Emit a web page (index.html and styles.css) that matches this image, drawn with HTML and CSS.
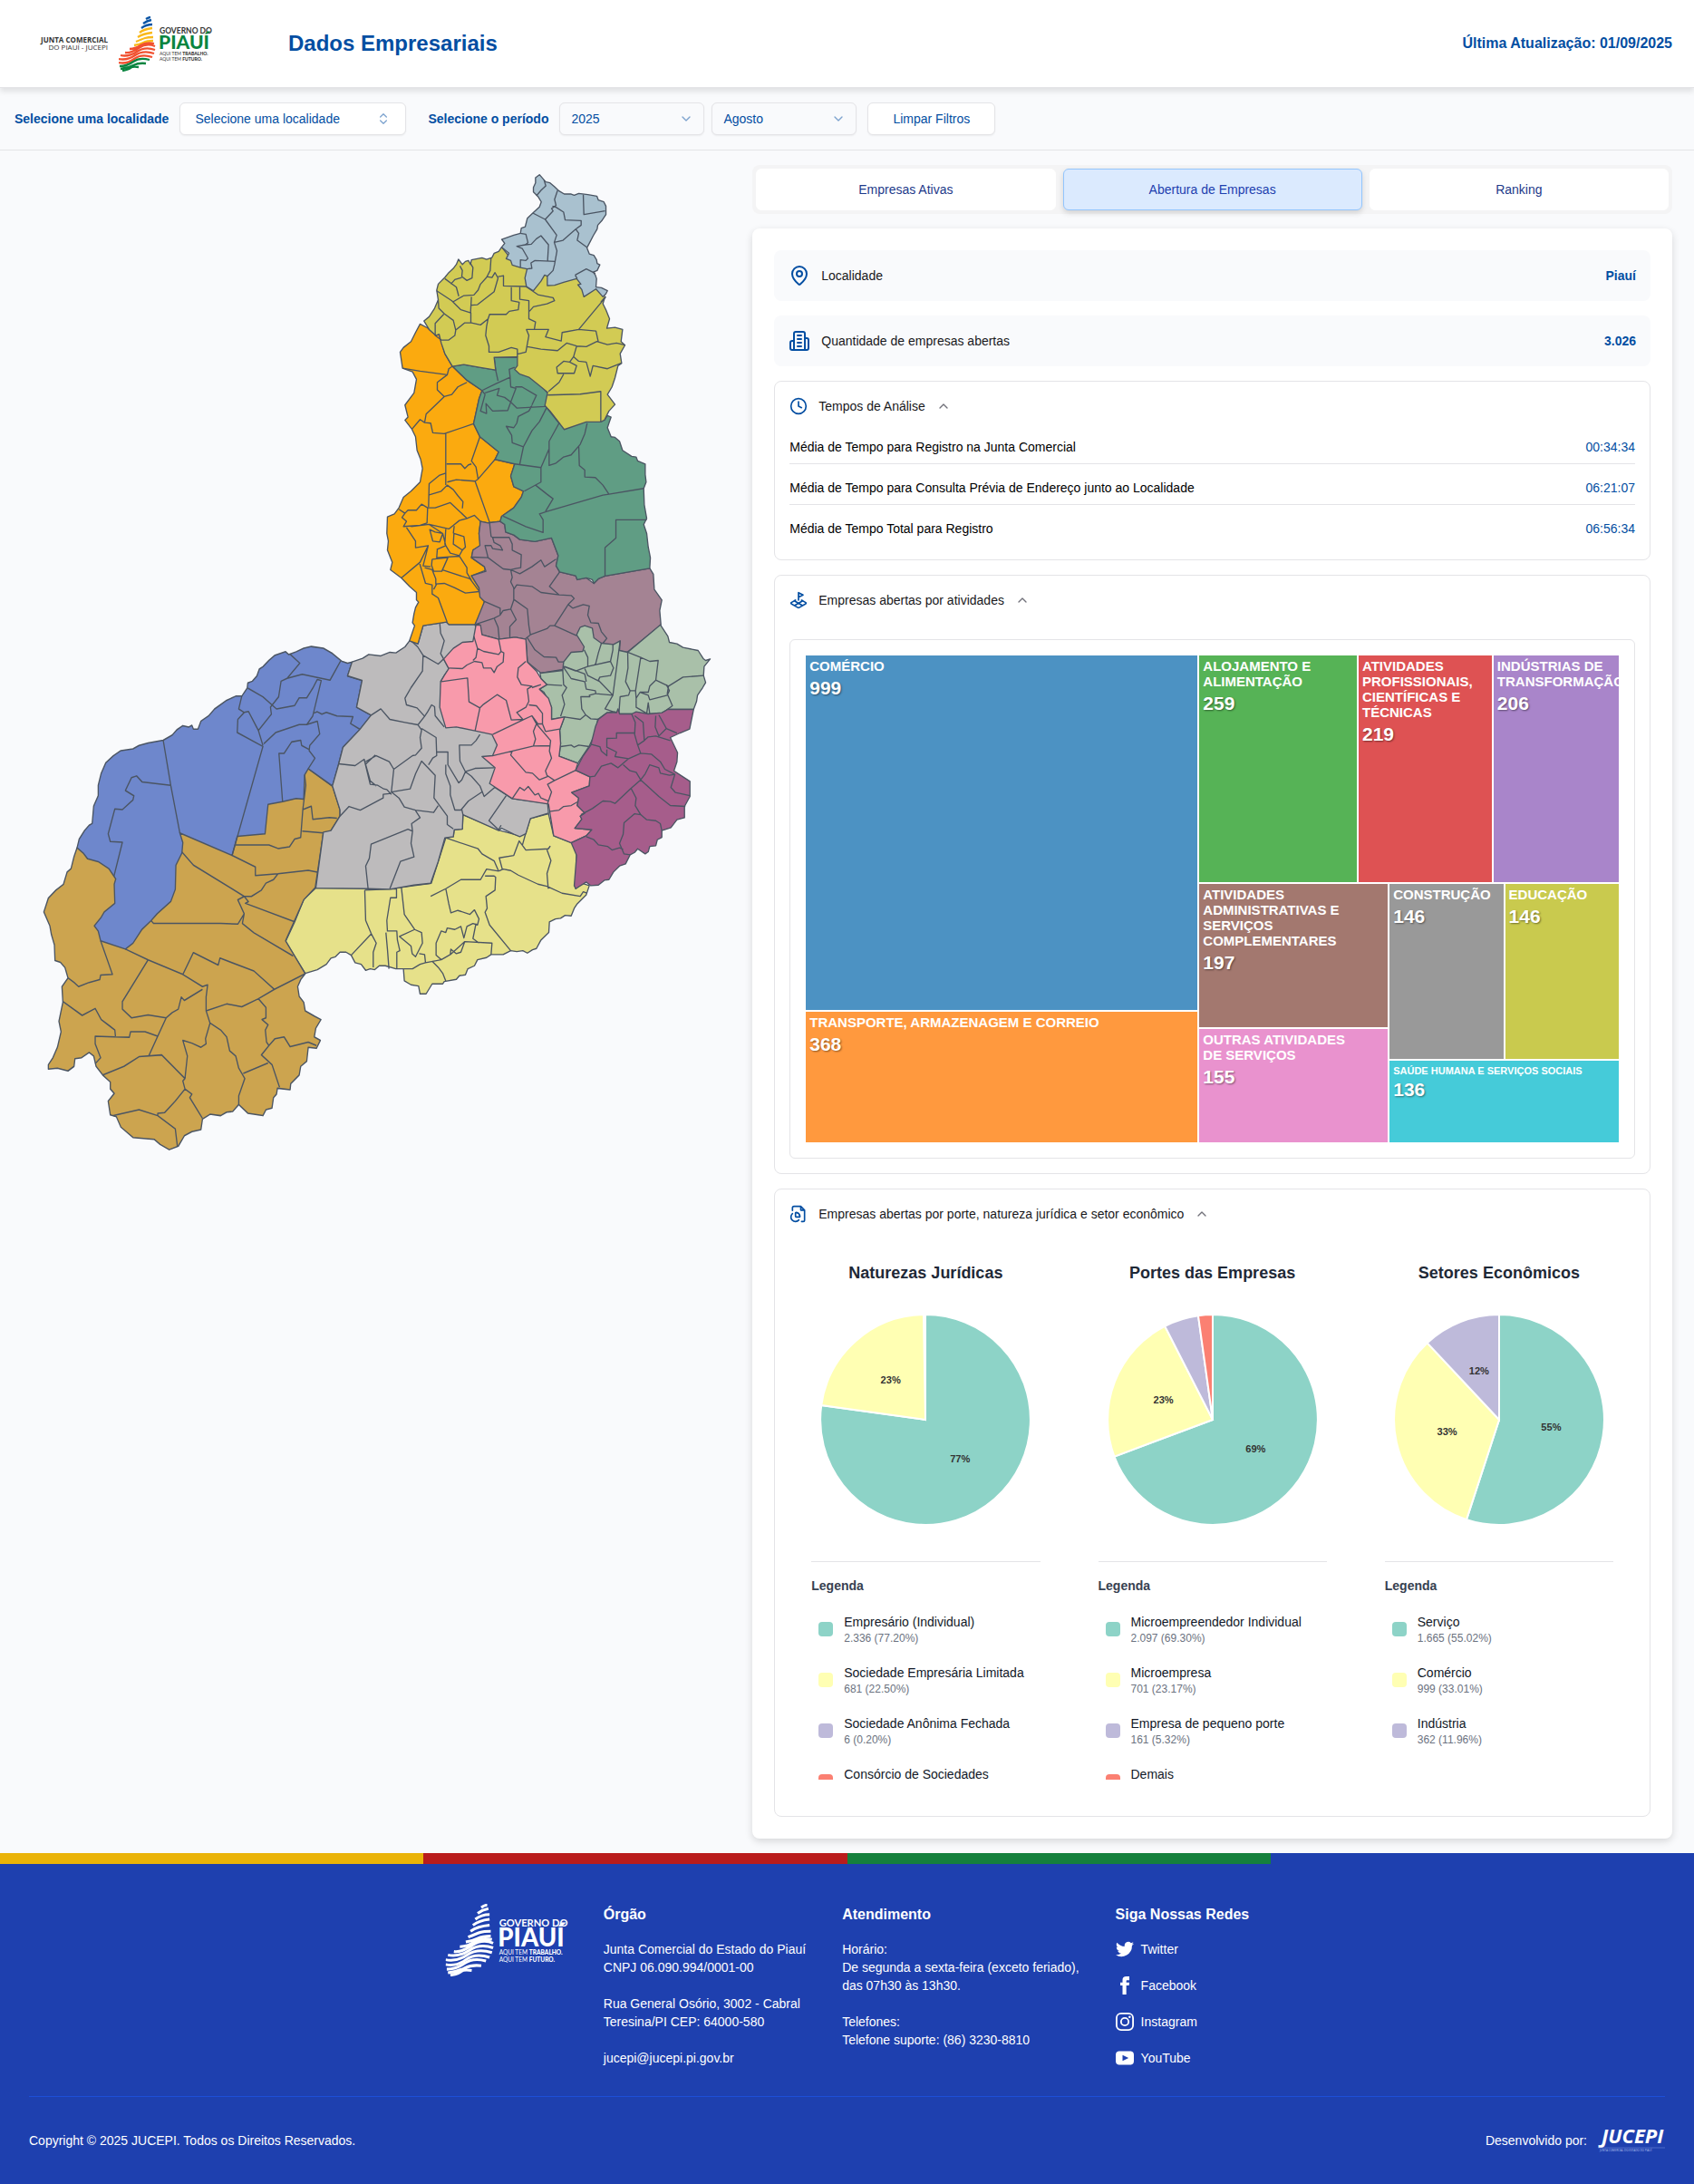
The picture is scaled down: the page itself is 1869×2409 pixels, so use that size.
FILE: index.html
```html
<!DOCTYPE html>
<html lang="pt-BR">
<head>
<meta charset="utf-8">
<meta name="viewport" content="width=device-width, initial-scale=1">
<title>Dados Empresariais - JUCEPI</title>
<link rel="stylesheet" href="styles.css">
</head>
<body>
<svg class="defs" aria-hidden="true">
  <symbol id="logo-bands" viewBox="0 0 102 61">
    <g fill="none" stroke-width="2.300">
      <g class="band-1"><path d="M30 3q3-2 5-2M27 8q4-3 9-4M25 13q5-4 12-4"/></g>
      <g class="band-2"><path d="M23 18q5-4 14-5M21 23q6-4 16-5M19 28q7-3 10-4t9-1M17 32q6-1 10-3t11-2"/></g>
      <g class="band-3"><path d="M12 36q6 0 12-4t15-2M7 40q6 1 15-5t18-2M2 43q9 2 18-4t20-2M0 47q9 2 18-4t21-2M0 51q9 2 17-4t20-2"/></g>
      <g class="band-4"><path d="M1 55q8 0 15-5t18-2M2 58q8-1 14-4t14-2M4 60q7-1 9-3t9-1"/></g>
    </g>
  </symbol>
  <symbol id="i-up" viewBox="0 0 24 24"><path d="m18 15-6-6-6 6"/></symbol>
  <symbol id="i-down" viewBox="0 0 24 24"><path d="m6 9 6 6 6-6"/></symbol>
</svg>

<header class="topbar">
  <div class="brand">
    <p class="brand-org"><strong>JUNTA COMERCIAL</strong><br>DO PIAUÍ - JUCEPI</p>
    <svg class="logo logo-color" viewBox="0 0 204 122" role="img" aria-label="Governo do Piauí">
      <use href="#logo-bands" width="204" height="122"/>
      <text class="logo-gov" x="90" y="38" font-size="17">GOVERNO DO</text>
      <text class="logo-name" x="88" y="72" font-size="42">PIAUÍ</text>
      <text class="logo-tag" x="90" y="85" font-size="10">AQUI TEM <tspan class="strong">TRABALHO.</tspan></text>
      <text class="logo-tag" x="90" y="97" font-size="10">AQUI TEM <tspan class="strong">FUTURO.</tspan></text>
    </svg>
  </div>
  <h1>Dados Empresariais</h1>
  <p class="updated">Última Atualização: 01/09/2025</p>
</header>

<form class="filters">
  <div class="field">
    <label for="place">Selecione uma localidade</label>
    <button type="button" id="place" class="control combo" aria-haspopup="listbox">Selecione uma localidade
      <svg class="icon" viewBox="0 0 24 24" width="16" height="16"><path d="m7 15 5 5 5-5M7 9l5-5 5 5"/></svg></button>
  </div>
  <div class="field">
    <label for="year">Selecione o período</label>
    <div class="period">
      <span class="select"><select id="year" class="control"><option>2025</option></select><svg class="icon" width="16" height="16"><use href="#i-down"/></svg></span>
      <span class="select"><select class="control" aria-label="Mês"><option>Agosto</option></select><svg class="icon" width="16" height="16"><use href="#i-down"/></svg></span>
    </div>
    <button type="reset" class="control">Limpar Filtros</button>
  </div>
</form>

<main class="content">
  <section class="map" aria-label="Mapa do Piauí">
    <svg viewBox="0 182 830 1100">
      <g transform="translate(310 850) scale(.33333)">
        <path class="r-yellow" d="M115 388L288 388 362 390 497 372 545 222 570 218 573 195 600 192 602 145 725 198 790 215 810 205 825 158 885 142 902 215 962 238 978 260 975 390 995 372 1020 380 1010 410 980 440 970 455 960 480 940 478 925 488 908 490 888 500 886 535 860 560 845 588 832 592 815 603 800 595 780 598 760 595 735 608 695 608 680 618 650 625 640 645 618 655 610 675 590 678 580 690 540 697 535 705 500 705 480 738 460 738 455 712 430 708 408 695 405 655 380 655 345 645 325 645 310 658 295 655 280 660 265 640 245 635 232 610 215 600 195 600 180 615 165 620 150 640 120 658 80 670 15 565 45 500 75 425Z"/>
        <path d="M277 395L280 495 298 538 315 570 305 600 305 650M277 395L382 390 382 420 362 420 350 495 352 530 383 530 385 560 393 595 383 600 383 655M298 540L232 610M347 535L352 590 357 655M398 385L408 475 442 525 392 548 430 580 434 605 445 615 468 570 465 535 442 525M457 605L475 608 478 635 460 640 435 655 405 655M478 635L530 625 560 608 608 565 698 570 695 608M500 630L520 650 535 670 545 695M530 625L513 610 513 570 530 530 545 535 550 520 575 525 595 515 605 553 615 515 635 505 650 510 655 490 640 460 625 475 585 462 562 470 555 440 545 390M608 565L595 600 580 605 562 590 560 608M645 505L635 555 655 570M495 415L545 390 595 360 660 360 680 325 720 332M545 222L652 258 665 275 705 298 720 332M675 348L705 348 710 352 708 395 678 415 682 455 675 468 690 510 760 595M720 332L735 325 760 330 785 345 850 375 880 382 930 405 990 415 1000 400 1012 405M732 325L722 288 770 280 788 232 810 262 885 258 890 250 880 262 893 297 880 340 884 390M798 248L810 205"/>
      </g>
      <g transform="translate(30 690) scale(.33333 .38265)">
        <path class="r-gold" d="M165 640L155 665 145 700 132 710 120 745 95 762 70 785 55 825 75 865 80 890 90 920 92 965 110 970 125 985 135 1015 115 1040 118 1085 105 1140 112 1170 100 1215 85 1245 70 1265 70 1278 100 1275 135 1283 155 1270 158 1248 180 1245 205 1230 220 1240 228 1270 250 1295 275 1315 275 1335 288 1348 268 1370 275 1410 295 1415 310 1445 350 1475 420 1480 440 1495 470 1510 500 1500 520 1470 545 1458 575 1452 580 1422 605 1408 640 1412 660 1402 680 1400 700 1380 730 1405 780 1412 790 1395 810 1390 815 1360 825 1350 828 1333 870 1337 872 1320 900 1295 905 1270 925 1255 930 1215 957 1218 970 1195 950 1185 955 1160 972 1135 950 1125 920 1110 915 1085 900 1068 895 1040 905 1020 920 1003 855 908 915 790 953 755 980 597 1003 593 1035 548 1035 530 1010 462 930 412 700 500 300 600Z"/>
        <path class="r-blue" d="M165 640L172 615 190 590 205 575 215 570 220 520 235 490 235 460 245 425 260 395 285 375 310 360 350 355 370 345 400 338 450 330 480 315 495 300 515 288 535 292 545 287 550 298 565 298 575 275 600 260 620 240 660 215 690 203 710 203 728 180 730 165 745 160 760 145 768 125 780 118 800 100 820 85 855 75 865 83 890 75 915 65 940 60 980 65 1010 80 1040 102 1060 108 1075 105 1060 145 1108 158 1090 235 1138 258 1100 300 1045 350 1030 400 1010 462 930 412 918 430 915 500 890 498 845 507 797 515 787 600 695 607 678 662 505 597 515 625 512 655 492 690 490 760 475 795 430 830 410 850 380 875 350 915 325 932 243 908 235 880 222 865 245 840 255 825 290 800 288 745 293 730 270 700 235 680 200 672 185 655Z"/>
        <path d="M450 330L475 460 505 597M475 460L380 450 362 433 345 438 325 475 353 490 350 502 315 530 290 528 268 600 275 622 315 624 287 722M710 203L700 240 718 250 732 247 765 302 780 345M718 250L697 270 695 308 780 348 678 662M730 180L780 205 825 240 885 230 900 208 925 208 945 180 960 155 973 158 945 260 925 285 900 285 822 308 783 340M860 152L902 108 870 82M860 152L910 140 1002 157 1037 102M860 152L840 160 832 205 805 235 808 255 765 302M948 252L960 248 975 255 990 250 1025 260 1078 262 1070 282 1100 298M925 285L960 275 968 312 935 345 933 360 952 382 930 412M935 358L908 345 905 330 875 335 850 368 833 368 845 507M918 430L922 460 912 530 905 610 885 615 868 637 830 642 800 632 688 632M912 530L940 520 945 558 1000 553 1025 555M910 592L980 597M678 662L755 695 755 720 830 715 930 705 960 710M512 652L550 690 718 780 742 780 775 762 790 742 815 732 830 715M718 780L697 790 718 830 697 860 640 858 418 858 410 850M718 780L732 795 722 800 885 853M718 830L712 858 750 885 880 952M243 908L282 1005 243 1007 240 1020 205 1028 170 1040 155 1028 135 1015M325 932L400 963 515 1005 580 1040 597 1035 592 1070 592 1110 605 1145 590 1190 592 1205 575 1215 545 1203 515 1195 530 1240 522 1305 445 1237 370 1242 320 1270 250 1295M400 963L315 1083 315 1105 345 1130 400 1122 460 1130 480 1115 500 1105 510 1070 520 1080 580 1048M515 1005L550 942 632 978 638 958 750 995 818 1048M592 1110L660 1090 710 1098 765 1075 818 1048 920 1003M765 1075L790 1100 790 1130 777 1135 797 1150 788 1165 792 1200 800 1210 820 1190 850 1185 870 1213 930 1200 957 1210M800 1210L775 1237 810 1265 835 1330M797 1260L715 1290M605 1145L640 1165 660 1185 670 1225 690 1240 700 1275 720 1305 700 1355 700 1380M118 1083L182 1123 225 1103 245 1135 275 1155 290 1165 292 1183M290 1185L338 1186 342 1170 390 1170 432 1183M290 1185L225 1183 225 1205 243 1245 225 1262M460 1130L432 1183 402 1240M522 1305L515 1312 522 1335 545 1350 538 1360 580 1420M522 1335L490 1370 455 1403 432 1405 432 1412M285 1412L370 1395 432 1412 490 1450 497 1500"/>
      </g>
      <g transform="translate(400 500) scale(.33333)">
        <path class="r-gray" d="M155 620L183 630 200 570 277 558 285 566 372 566 400 700 470 900 470 1010 437 1105 495 1142 612 1158 615 1190 555 1208 540 1258 520 1268 500 1260 460 1240 450 1248 332 1195 330 1243 303 1245 300 1268 272 1272 250 1350 225 1422 170 1428 90 1442 18 1440 -155 1438 -130 1253 -105 1248 -75 1200 -75 1180 -100 1100 -80 1030 -65 972 -10 914 28 866 -20 840 -2 751 -50 736 -35 690 0 678 20 665 60 670 90 658 110 660 140 640Z"/>
        <path d="M255 560L258 595 270 620 258 662 268 680 250 697 200 668 182 640 160 620M200 668L198 720 160 775 140 810 145 832 180 842 205 870 215 855 228 832 238 838 240 868 270 905M268 680L285 712 270 735 258 755M205 870L183 898 140 890 90 880 60 845 28 866M183 898L195 915 190 940 195 975 175 998 165 1000 103 1045 88 1020 45 1000 10 1020M195 910L243 940 245 1000 232 1008 218 1030M245 988L282 988 282 1030 318 1090 328 1080 340 1053 372 1042 435 1040M275 1030L275 1060 290 1100 290 1130 305 1180 325 1180 350 1150 395 1120M325 965L320 965 322 1018 340 1053 360 1068 388 1100 402 1135 437 1105M320 965L360 965 375 950 388 930M103 1045L95 1120 157 1110 175 1060 195 1018 240 1065 236 1140 280 1200 280 1228 300 1242M95 1120L120 1140 138 1170 175 1180 235 1188 250 1165M5 1012L25 1095 50 1098 70 1110 80 1112 95 1128M-75 1200L-45 1168 -8 1180 68 1140 68 1128 95 1125M175 1182L190 1205 162 1225 165 1250 150 1243 28 1293 22 1340 10 1365 18 1440M165 1250L160 1290 170 1335 125 1350 90 1440M475 1132L418 1215 450 1245 458 1230M332 1195L328 1178M-80 1027L-25 1033 5 1012 25 1083 45 1100M8 1030L42 998"/>
        <path class="r-orange" d="M190 -428L215 -415 242 -390 253 -394 272 -330 297 -288 345 -242 395 -208 385 -180 367 -98 388 -55 450 -5 438 20 503 35 490 75 500 110 532 125 525 145 510 165 500 180 460 208 455 225 415 230 390 225 385 265 390 305 365 320 360 345 403 375 405 388 360 405 385 445 390 475 403 490 395 520 372 566 285 566 277 558 200 570 183 630 155 620 172 570 165 560 170 530 175 510 185 492 178 485 178 460 155 440 128 412 92 385 98 360 82 320 85 290 80 265 82 210 105 200 120 180 135 145 160 125 190 95 198 50 192 20 180 -10 175 -55 163 -80 140 -110 150 -120 140 -160 170 -200 178 -245 165 -270 132 -282 124 -335 135 -350 160 -370 175 -400Z"/>
        <path d="M120 185L140 198 150 188 178 188 195 168 215 180 213 230 190 238 135 242 145 225 130 212 140 198M215 180L240 180 290 163 345 215 320 222 300 238 285 250 220 235M345 215L370 205 390 225M145 245L175 290 175 312 217 305 190 360 128 412M160 242L220 235 265 265 240 260 222 252 232 290 255 293 265 265 275 305 245 318M275 250L272 300 290 330 320 338 330 320 300 300 302 265 335 275 340 310 330 320M303 240L300 265M217 305L200 372 225 375M247 318L245 345 320 340 345 378 345 395 360 420M230 350L282 345 262 390 235 390 228 370 230 350M262 385L355 415 385 455M188 362L208 430 230 435 230 465 250 478 280 560M205 378L230 385 242 415 242 432 270 430 305 445 340 462 385 457M235 450L245 432"/>
        <path class="r-mauve" d="M390 225L415 230 455 225 470 235 473 260 500 270 520 285 570 292 625 280 647 338 640 372 652 392 705 405 710 418 740 412 765 430 780 415 802 406 950 380 962 400 965 450 990 485 983 520 987 567 875 658 830 650 790 628 760 680 662 715 590 727 545 690 540 615 505 608 450 615 395 600 385 565 372 566 403 490 388 475 385 445 360 405 408 390 403 375 360 345 365 320 388 305 385 265Z"/>
        <path d="M420 230L425 275 430 278 485 278 495 300 495 320 525 335 523 378 510 380 490 385 465 382 415 345 360 343M430 278L435 295 455 305 463 320 430 315 425 305 405 305 410 325 415 345M490 385L495 410 490 425 500 445 500 485 490 515M490 385L520 398 560 375 590 353 602 375 640 350M652 392L618 440 650 468 690 470 700 480 680 500 635 570 620 570 610 580 555 600 550 570 545 515 500 483M650 468L590 460 560 440 510 435 500 450M403 490L455 512 455 535 435 545 372 566M455 535L465 520 490 515 508 550 487 573 487 612M435 545L448 575 452 615M388 568L392 595M680 500L695 512 730 500 750 505 745 535 755 560 780 562 790 590 808 612 795 628M635 570L708 603M545 610L570 650 600 673 640 675 648 690 665 690M555 600L540 612"/>
        <path class="r-lgreen" d="M735 570L760 578 765 610 790 628 830 632 852 620 850 652 877 658 985 567 1010 605 1015 625 1040 630 1060 642 1110 652 1128 680 1135 685 1150 680 1130 705 1128 735 1135 758 1125 775 1108 800 1105 820 1095 847 1010 847 990 860 950 862 850 862 835 855 808 858 778 880 770 925 750 968 712 1025 650 1002 655 960 652 915 668 872 625 880 625 840 600 790 585 780 610 765 590 745 587 727 662 718 665 690 690 658 728 655 733 640 708 600 720 575Z"/>
        <path d="M665 705L705 720 745 705 820 688 830 710 820 735 785 740 780 750 828 800M745 705L745 675 733 650M770 700L780 660 790 628M828 632L828 650 820 688M852 620L828 800 802 845 838 858M877 658L878 710 870 755 885 785 903 785 910 740 920 675 877 658M920 675L950 688 978 685 970 750 950 770 945 790 918 790 905 810M970 750L1012 770 1060 740 1128 735M1012 770L1008 795 1025 835 990 860M1005 765L1015 785 1008 800 950 815 945 800 918 790M885 785L880 800 852 805 848 860M903 785L905 810 905 840 940 860 945 825 950 862M662 718L665 765 675 775 660 800 668 830 655 870M610 765L660 768M665 708L690 745 735 755 740 780 770 785 772 795 828 800M735 712L745 735 785 755M668 705L735 730 740 755M770 795L750 800 752 805 722 805 725 845 738 865 720 880 668 872M738 865L755 878 780 880M655 970L690 965 700 972 715 965 750 970"/>
        <path class="r-pink" d="M375 568L390 568 395 600 450 615 505 608 540 615 545 690 575 720 590 745 610 765 585 780 615 810 625 840 625 880 668 872 652 915 655 960 650 1002 712 1025 705 1048 752 1070 750 1100 692 1122 715 1140 710 1165 735 1190 720 1200 725 1210 702 1240 758 1245 740 1265 690 1288 632 1265 615 1160 495 1142 420 1092 438 1040 395 1003 430 1000 445 965 428 930 372 918 310 905 275 908 255 840 258 755 270 735 285 712 268 680 300 645 330 625 365 622Z"/>
        <path d="M450 615L458 655 467 660 465 690 445 705 435 725 425 710 400 710 395 692 370 688 345 700 330 712 285 710M458 655L450 665 400 655 380 645 375 675 365 685M380 645L368 605M540 688L515 710 512 740 525 765 560 770 545 780 550 820 540 840 510 857 530 880 492 882 475 817 445 798 428 810 400 830 388 842 372 918M388 842L352 822 347 743 260 755M590 765L560 775M550 832L575 835 595 860 595 895 580 895 560 868 530 882 430 930M560 868L575 895 622 950 618 985 625 1008 605 1050 610 1065 635 1082 705 1048M575 895L565 920 572 945 565 968M430 1000L565 968 620 967M495 985L490 998 540 1055 562 1058 585 1080 615 1068M605 920L652 912M605 920L595 895M635 1082L612 1095 625 1120 612 1158M495 1142L520 1105 535 1115 548 1102 570 1130 582 1125 590 1140 615 1150M617 1185L650 1180 665 1168 690 1165 712 1152"/>
        <path class="r-purple" d="M845 845L850 862 890 862 905 855 945 862 990 858 1010 847 1095 847 1082 912 1050 925 1018 940 1042 990 1040 1020 1030 1050 1060 1070 1083 1085 1083 1135 1065 1168 1065 1205 1040 1212 1020 1238 990 1248 990 1270 975 1278 970 1298 950 1300 945 1318 935 1325 910 1308 900 1320 885 1328 870 1358 850 1365 830 1385 815 1410 800 1412 780 1428 755 1430 740 1418 705 1440 700 1430 708 1330 690 1288 740 1265 758 1245 702 1240 725 1210 720 1200 735 1190 710 1165 715 1140 692 1122 750 1100 752 1070 705 1048 730 1000 755 965 770 905 780 880 808 858 840 858Z"/>
        <path d="M890 862L902 890 900 930 910 965 932 950 928 890 900 868M900 925L840 925 840 942 808 943 808 972 840 988 835 1003 880 1010 920 992 910 965M932 950L945 938 970 935 1018 950M970 868L968 905 980 935 1005 910 1040 925M980 865L1005 910M755 962L785 970 790 985 808 1000 808 980M920 992L955 995 985 1020 1000 1045 1033 1062M880 1010L845 1040 822 1025 790 1035 768 1068 752 1070M862 1030L885 1050 905 1055 920 1080 935 1060 950 1030 980 1040 985 1058 1015 1065 1033 1062 1020 1105 1035 1122 1083 1132M920 1080L980 1135 1018 1165 1068 1168M920 1080L888 1108 835 1158 820 1152 795 1150 760 1175 722 1195M888 1108L905 1140 902 1165 920 1195 900 1192 865 1222 862 1260 850 1290 865 1325 885 1328M920 1195L940 1212 970 1215 985 1225 990 1248M740 1268L765 1278 780 1295 810 1300 825 1312 850 1305 862 1310"/>
      </g>
      <g transform="translate(420 170) scale(.33333)">
        <path class="r-green" d="M237 702L275 696 330 706 380 714 375 672 452 671 560 800 740 880 750 865 762 870 755 890 750 905 762 935 775 937 790 950 800 980 830 1000 845 1002 850 1015 875 1025 875 1060 878 1085 870 1106 872 1160 880 1205 870 1225 880 1255 885 1300 892 1335 890 1370 742 1396 720 1405 705 1420 700 1408 680 1402 650 1408 645 1395 592 1382 580 1362 587 1328 565 1270 510 1282 460 1275 440 1260 413 1250 410 1225 395 1215 400 1198 440 1170 465 1135 472 1115 440 1100 430 1065 443 1025 378 1010 390 985 328 935 307 892 325 810 335 782 285 748Z"/>
        <path class="r-olive" d="M400 308L390 322 375 328 368 342 350 348 335 343 300 350 297 365 290 352 280 355 270 365 257 348 250 365 240 378 225 392 212 408 190 430 185 450 190 482 178 510 160 538 143 552 160 580 182 600 193 596 200 625 212 660 237 702 275 696 330 706 380 714 375 672 452 671 452 700 443 712 460 728 490 738 520 762 552 788 543 832 560 850 607 911 680 886 728 886 740 880 755 850 775 828 750 795 765 770 775 740 785 700 797 692 792 660 808 632 795 620 800 580 775 573 748 576 757 545 745 515 735 495 742 472 712 440 650 400 550 390 480 370 430 345Z"/>
        <path class="r-sky" d="M525 68L540 85 546 92 560 95 575 108 590 122 607 132 630 132 640 136 655 130 685 134 715 139 720 152 738 158 745 172 745 200 733 218 718 235 716 248 703 270 690 295 682 310 690 330 705 335 714 350 716 362 725 366 716 385 703 390 710 400 714 412 712 440 730 442 750 452 745 462 735 472 712 446 672 472 665 448 652 432 662 430 648 412 605 424 575 434 551 435 551 404 542 400 530 420 505 452 482 438 477 410 484 380 462 375 435 367 430 352 415 346 424 328 400 308 410 295 400 282 440 268 462 262 465 245 478 240 485 212 503 195 525 175 531 158 520 140 505 125 505 110 512 95 512 78Z"/>
        <path d="M540 85L546 105 530 120 515 138M585 120L575 150 580 170 565 180 570 188 544 216 503 195M670 134L672 200 742 188M568 172L580 176 605 192 610 218 663 220 663 235 645 248 603 285 574 292 582 268 544 216M645 248L655 262 650 285 682 308M574 292L583 320 575 365 570 385 551 404M462 262L480 265 487 293 478 300 450 305 468 312 487 345 480 352 462 350 462 375M478 300L498 298 515 280 530 270 555 300 552 352M484 380L500 378 497 360 510 352 578 355M643 400L680 380 710 395M643 400L650 412"/>
        <path d="M262 370L270 385 268 405 285 418 302 410 305 375 297 362M232 430L245 415 268 408M365 342L362 385 350 408 330 430 322 450 308 466 275 468 240 488M212 412L250 440 258 470M185 452L235 485 265 515 298 525 298 558M190 482L192 510 210 528 240 550 248 582 245 600 225 615 200 615 180 600 180 560 210 528M248 582L278 558 300 558 330 565 355 545M300 472L297 525M300 500L320 498 375 455 388 410 378 392 368 408 350 405M388 405L406 402 406 436 480 438M432 440L432 485 458 490 455 515 425 520 415 530 360 530 355 545M460 440L460 480 490 485 490 545 512 555 508 580 482 580 490 600 480 655 452 662 452 645 432 640 390 655 358 655 358 635 347 600 350 570 355 545M480 438L520 465 570 475 575 485 550 495 505 505 492 520M745 472L655 580 600 590 597 618 545 605 555 580 508 580M655 580L712 585 720 622M485 637L530 645 585 650 615 625 648 635 680 637 715 620 750 630 780 625 808 632M648 635L638 670 625 688 605 685 582 705 585 725 640 725 648 700 625 688M638 670L655 685 680 688 693 735 702 700 750 710 795 692M605 728L590 755 555 785M552 797L660 794 728 785 728 886M740 475L728 490M452 662L452 671"/>
        <path d="M72 708L130 718 220 730 225 710 237 702M220 730L187 755 187 780 210 802 235 795 255 770 285 755M210 802L150 860 145 888 165 890 172 922 210 925 307 892M103 910L130 878 145 888M215 925L215 1095M328 935L300 1015 315 1035 322 1075 378 1010M218 1025L265 1025 278 1040 290 1028 300 1025M220 1085L250 1077 312 1082 322 1075M312 1082L360 1218M215 1055L195 1062 160 1090 158 1168M160 1127L200 1115 220 1095 240 1110 255 1130 272 1150 270 1172"/>
        <path d="M335 782L380 760 428 738 425 712 443 705M380 714L388 750M335 782L345 795 330 850 350 858 348 825 370 850 420 848 430 820 410 805 385 798 392 775 345 790M428 738L430 770 447 775 430 820 450 840 543 835M445 770L467 770 515 798 500 830M500 832L490 850 455 868 450 890 440 905 415 900 433 930 435 955 472 968 500 915 525 885 548 840M472 968L460 1025M543 832L590 890 557 950 557 1030 580 1022 605 1002 630 995 660 960 675 925 683 890M443 1025L530 1037 530 1085 475 1115M530 1037L557 975M655 965L657 1030 675 1045 675 1068 710 1070 735 1095 755 1125 870 1106M755 1125L735 1128 550 1182 525 1190 537 1210 537 1252 480 1232 405 1198M512 1095L550 1125 570 1140 545 1182M742 1396L742 1302 778 1270 778 1210 880 1210"/>
      </g>
    </svg>
  </section>

  <section class="results">
    <nav class="tabs" aria-label="Relatórios">
      <button type="button">Empresas Ativas</button>
      <button type="button" class="active" aria-current="page">Abertura de Empresas</button>
      <button type="button">Ranking</button>
    </nav>

    <div class="panel">
      <div class="stat">
        <svg class="icon" viewBox="0 0 24 24" width="24" height="24"><path d="M20 10c0 5-5.500 10.200-7.400 11.800a1 1 0 0 1-1.200 0C9.500 20.200 4 15 4 10a8 8 0 0 1 16 0"/><circle cx="12" cy="10" r="3"/></svg>
        <span>Localidade</span><strong>Piauí</strong>
      </div>
      <div class="stat">
        <svg class="icon" viewBox="0 0 24 24" width="24" height="24"><path d="M6 22V4a2 2 0 0 1 2-2h8a2 2 0 0 1 2 2v18ZM6 12H4a2 2 0 0 0-2 2v6a2 2 0 0 0 2 2h2M18 9h2a2 2 0 0 1 2 2v9a2 2 0 0 1-2 2h-2M10 6h4M10 10h4M10 14h4M10 18h4"/></svg>
        <span>Quantidade de empresas abertas</span><strong>3.026</strong>
      </div>

      <section class="card">
        <button type="button" class="card-head" aria-expanded="true">
          <svg class="icon" viewBox="0 0 24 24" width="20" height="20"><circle cx="12" cy="12" r="10"/><path d="M12 6v6l4 2"/></svg>
          Tempos de Análise
          <svg class="icon chevron" width="16" height="16"><use href="#i-up"/></svg>
        </button>
        <dl class="times">
          <div><dt>Média de Tempo para Registro na Junta Comercial</dt><dd>00:34:34</dd></div>
          <div><dt>Média de Tempo para Consulta Prévia de Endereço junto ao Localidade</dt><dd>06:21:07</dd></div>
          <div><dt>Média de Tempo Total para Registro</dt><dd>06:56:34</dd></div>
        </dl>
      </section>

      <section class="card">
        <button type="button" class="card-head" aria-expanded="true">
          <svg class="icon" viewBox="0 0 24 24" width="20" height="20"><path d="m12 8 6-3-6-3v10"/><path d="m8 11.990-5.500 3.140a1 1 0 0 0 0 1.740l8.500 4.860a2 2 0 0 0 2 0l8.500-4.860a1 1 0 0 0 0-1.740L16 12M6.490 12.850l11.020 6.300M17.510 12.850 6.500 19.150"/></svg>
          Empresas abertas por atividades
          <svg class="icon chevron" width="16" height="16"><use href="#i-up"/></svg>
        </button>
        <div class="frame">
          <div class="treemap">
            <div class="col" style="flex-grow:1367">
              <div class="cell c-blue" style="flex-grow:999"><h3>COMÉRCIO</h3><b>999</b></div>
              <div class="cell c-orange" style="flex-grow:368"><h3>TRANSPORTE, ARMAZENAGEM E CORREIO</h3><b>368</b></div>
            </div>
            <div class="col" style="flex-grow:1464">
              <div class="row" style="flex-grow:684">
                <div class="cell c-green" style="flex-grow:259"><h3>ALOJAMENTO E ALIMENTAÇÃO</h3><b>259</b></div>
                <div class="cell c-red" style="flex-grow:219"><h3>ATIVIDADES PROFISSIONAIS, CIENTÍFICAS E TÉCNICAS</h3><b>219</b></div>
                <div class="cell c-purple" style="flex-grow:206"><h3>INDÚSTRIAS DE TRANSFORMAÇÃO</h3><b>206</b></div>
              </div>
              <div class="row" style="flex-grow:780">
                <div class="col" style="flex-grow:352">
                  <div class="cell c-brown" style="flex-grow:197"><h3>ATIVIDADES ADMINISTRATIVAS E SERVIÇOS COMPLEMENTARES</h3><b>197</b></div>
                  <div class="cell c-pink" style="flex-grow:155"><h3>OUTRAS ATIVIDADES<br>DE SERVIÇOS</h3><b>155</b></div>
                </div>
                <div class="col" style="flex-grow:428">
                  <div class="row" style="flex-grow:292">
                    <div class="cell c-gray" style="flex-grow:146"><h3>CONSTRUÇÃO</h3><b>146</b></div>
                    <div class="cell c-lime" style="flex-grow:146"><h3>EDUCAÇÃO</h3><b>146</b></div>
                  </div>
                  <div class="cell c-cyan small" style="flex-grow:136"><h3>SAÚDE HUMANA E SERVIÇOS SOCIAIS</h3><b>136</b></div>
                </div>
              </div>
            </div>
          </div>
        </div>
      </section>

      <section class="card">
        <button type="button" class="card-head" aria-expanded="true">
          <svg class="icon" viewBox="0 0 24 24" width="20" height="20"><path d="M15 2v5h5M16 22h2a2 2 0 0 0 2-2V7l-5-5H6a2 2 0 0 0-2 2v3.500M4.017 11.512a6 6 0 1 0 8.466 8.475"/><path d="M9 16a1 1 0 0 1-1-1v-4c0-.552.450-1.008.995-.917a6 6 0 0 1 4.922 4.922c.091.544-.365.995-.917.995z"/></svg>
          Empresas abertas por porte, natureza jurídica e setor econômico
          <svg class="icon chevron" width="16" height="16"><use href="#i-up"/></svg>
        </button>
        <div class="pies">
          <article>
            <h2>Naturezas Jurídicas</h2>
            <svg class="pie" viewBox="-127 -127 254 254">
              <path class="s1" d="M0 0V-115A115 115 0 1 1-113.900-15.800Z"/>
              <path class="s2" d="M0 0L-113.900-15.800A115 115 0 0 1-2-115Z"/>
              <text x="38" y="47">77%</text><text x="-38" y="-40">23%</text>
            </svg>
            <div class="legend"><h4>Legenda</h4>
              <ul>
                <li><i class="s1"></i><p>Empresário (Individual)<small>2.336 (77.20%)</small></p></li>
                <li><i class="s2"></i><p>Sociedade Empresária Limitada<small>681 (22.50%)</small></p></li>
                <li><i class="s3"></i><p>Sociedade Anônima Fechada<small>6 (0.20%)</small></p></li>
                <li><i class="s4"></i><p>Consórcio de Sociedades</p></li>
              </ul></div>
          </article>
          <article>
            <h2>Portes das Empresas</h2>
            <svg class="pie" viewBox="-127 -127 254 254">
              <path class="s1" d="M0 0V-115A115 115 0 1 1-107.700 40.300Z"/>
              <path class="s2" d="M0 0L-107.700 40.300A115 115 0 0 1-52.400-102.400Z"/>
              <path class="s3" d="M0 0L-52.400-102.400A115 115 0 0 1-15.900-113.900Z"/>
              <path class="s4" d="M0 0L-15.900-113.900A115 115 0 0 1 0-115Z"/>
              <text x="47" y="36">69%</text><text x="-54" y="-18">23%</text>
            </svg>
            <div class="legend"><h4>Legenda</h4>
              <ul>
                <li><i class="s1"></i><p>Microempreendedor Individual<small>2.097 (69.30%)</small></p></li>
                <li><i class="s2"></i><p>Microempresa<small>701 (23.17%)</small></p></li>
                <li><i class="s3"></i><p>Empresa de pequeno porte<small>161 (5.32%)</small></p></li>
                <li><i class="s4"></i><p>Demais</p></li>
              </ul></div>
          </article>
          <article>
            <h2>Setores Econômicos</h2>
            <svg class="pie" viewBox="-127 -127 254 254">
              <path class="s1" d="M0 0V-115A115 115 0 1 1-35.700 109.300Z"/>
              <path class="s2" d="M0 0L-35.700 109.300A115 115 0 0 1-78.600-84Z"/>
              <path class="s3" d="M0 0L-78.600-84A115 115 0 0 1 0-115Z"/>
              <text x="57" y="12">55%</text><text x="-57" y="17">33%</text><text x="-22" y="-50">12%</text>
            </svg>
            <div class="legend"><h4>Legenda</h4>
              <ul>
                <li><i class="s1"></i><p>Serviço<small>1.665 (55.02%)</small></p></li>
                <li><i class="s2"></i><p>Comércio<small>999 (33.01%)</small></p></li>
                <li><i class="s3"></i><p>Indústria<small>362 (11.96%)</small></p></li>
              </ul></div>
          </article>
        </div>
      </section>
    </div>
  </section>
</main>

<footer class="footer">
  <div class="stripes"><span></span><span></span><span></span></div>
  <div class="footer-cols">
    <svg class="logo logo-white" viewBox="0 0 204 122" role="img" aria-label="Governo do Piauí">
      <use href="#logo-bands" width="204" height="122"/>
      <text class="logo-gov" x="90" y="38" font-size="17">GOVERNO DO</text>
      <text class="logo-name" x="88" y="72" font-size="42">PIAUÍ</text>
      <text class="logo-tag" x="90" y="85" font-size="10">AQUI TEM <tspan class="strong">TRABALHO.</tspan></text>
      <text class="logo-tag" x="90" y="97" font-size="10">AQUI TEM <tspan class="strong">FUTURO.</tspan></text>
    </svg>
    <section>
      <h3>Órgão</h3>
      <p>Junta Comercial do Estado do Piauí<br>CNPJ 06.090.994/0001-00</p>
      <p>Rua General Osório, 3002 - Cabral<br>Teresina/PI CEP: 64000-580</p>
      <p>jucepi@jucepi.pi.gov.br</p>
    </section>
    <section>
      <h3>Atendimento</h3>
      <p>Horário:<br>De segunda a sexta-feira (exceto feriado),<br>das 07h30 às 13h30.</p>
      <p>Telefones:<br>Telefone suporte: (86) 3230-8810</p>
    </section>
    <section>
      <h3>Siga Nossas Redes</h3>
      <ul class="social">
        <li><a href="#twitter"><svg viewBox="0 0 24 24" width="20" height="20"><path d="M24 4.600a10 10 0 0 1-2.800.8 5 5 0 0 0 2.100-2.700c-1 .6-2 1-3.100 1.200a4.900 4.900 0 0 0-8.400 4.500A14 14 0 0 1 1.700 3.200a4.900 4.900 0 0 0 1.500 6.500 5 5 0 0 1-2.200-.6v.1a4.900 4.900 0 0 0 3.900 4.800 5 5 0 0 1-2.200.1 4.900 4.900 0 0 0 4.600 3.400A10 10 0 0 1 0 19.500a14 14 0 0 0 21.500-12.400 10 10 0 0 0 2.500-2.500z"/></svg>Twitter</a></li>
        <li><a href="#facebook"><svg viewBox="0 0 24 24" width="20" height="20"><path d="M9 8H6v4h3v12h5V12h3.600l.4-4h-4V6.300c0-1 .2-1.300 1.100-1.300H18V0h-3.800C10.600 0 9 1.600 9 4.600z"/></svg>Facebook</a></li>
        <li><a href="#instagram"><svg viewBox="0 0 24 24" width="20" height="20"><g fill="none" stroke="currentColor" stroke-width="2.200"><rect x="1.100" y="1.100" width="21.800" height="21.800" rx="6"/><circle cx="12" cy="12" r="5"/></g><circle cx="18.400" cy="5.600" r="1.500"/></svg>Instagram</a></li>
        <li><a href="#youtube"><svg viewBox="0 0 24 24" width="20" height="20"><path fill-rule="evenodd" d="M4 3h16q4 .4 4 5v8q0 4.600-4 5H4q-4-.4-4-5V8q0-4.600 4-5zm5 5v8l8-4z"/></svg>YouTube</a></li>
      </ul>
    </section>
  </div>
  <div class="footer-bottom">
    <p>Copyright © 2025 JUCEPI. Todos os Direitos Reservados.</p>
    <p class="dev">Desenvolvido por:
      <svg viewBox="0 0 74 30" width="74" height="30" role="img" aria-label="JUCEPI">
        <text x="4" y="18" font-size="22" class="jucepi">JUCEPI</text>
        <path d="M0 23H74" stroke="#7e96e0" stroke-width=".5"/>
        <text x="2" y="27" font-size="3" class="jucepi-sub">JUNTA COMERCIAL DO ESTADO DO PIAUÍ</text>
      </svg></p>
  </div>
</footer>
</body>
</html>
```
FILE: styles.css
```css
* { box-sizing: border-box; margin: 0; padding: 0; }
:root { --blue: #034ea2; --line: #e4e4e7; --bg: #f9fafc; }
body {
  background: var(--bg);
  color: #18181b;
  font: 14px/20px "Liberation Sans", Arial, sans-serif;
}
button, select { font: inherit; color: inherit; }
ul { list-style: none; }
a { color: inherit; text-decoration: none; }
.defs { position: absolute; width: 0; height: 0; }
.icon { fill: none; stroke: currentColor; stroke-width: 2; stroke-linecap: round; stroke-linejoin: round; flex: none; }

/* Header */
.topbar {
  display: flex; align-items: center;
  min-height: 97px; padding: 0 24px 0 44px;
  background: #fff; color: var(--blue);
  border-bottom: 1px solid var(--line);
  box-shadow: 0 4px 6px rgba(0, 0, 0, .1);
  position: relative;
}
.brand { display: flex; align-items: center; gap: 12px; width: 274px; }
.brand-org { flex: none; width: 75px; color: #333; font: 8px/8px "Open Sans", sans-serif; text-align: right; white-space: nowrap; }
.logo { flex: none; overflow: visible; }
.logo-color { width: 102px; height: 61px; --b1: #0a55a5; --b2: #f9b91a; --b3: #f1502f; --b4: #0a8540; --name: #0a8540; --ink: #333; }
.logo-white { width: 135px; height: 80px; --b1: #fff; --b2: #fff; --b3: #fff; --b4: #fff; --name: #fff; --ink: #fff; }
.band-1 { stroke: var(--b1); }
.band-2 { stroke: var(--b2); }
.band-3 { stroke: var(--b3); }
.band-4 { stroke: var(--b4); }
.logo-gov { fill: var(--ink); font-family: Lato, sans-serif; font-weight: 700; }
.logo-name { fill: var(--name); font-family: Lato, sans-serif; font-weight: 900; }
.logo-tag { fill: var(--ink); font-family: Lato, sans-serif; }
.logo-tag .strong { font-weight: 900; }
h1 { font-size: 24px; line-height: 32px; }
.updated { margin-left: auto; font-size: 16px; line-height: 24px; font-weight: 700; }

/* Filters */
.filters {
  display: flex; align-items: center; gap: 24px;
  padding: 16px; border-bottom: 1px solid var(--line); color: var(--blue);
}
.field { display: flex; align-items: center; gap: 12px; }
.field label { font-weight: 700; }
.period { display: flex; gap: 8px; }
.control {
  height: 36px; padding: 0 27px;
  background: #fff; border: 1px solid var(--line); border-radius: 6px;
  box-shadow: 0 1px 2px rgba(0, 0, 0, .06);
}
.combo { display: flex; align-items: center; justify-content: space-between; width: 250px; padding: 0 16px; }
.combo .icon, .select .icon { opacity: .5; }
.select { position: relative; }
.select .control { appearance: none; width: 160px; padding: 0 12px; background: var(--bg); }
.select .icon { position: absolute; right: 12px; top: 10px; pointer-events: none; }

/* Main layout */
.content { display: grid; grid-template-columns: minmax(0, 9fr) minmax(0, 11fr); padding: 16px 24px 16px 0; }
.map svg { display: block; width: 100%; stroke: #4b5563; stroke-width: 4; stroke-linejoin: round; fill: none; }
.r-sky { fill: #a9c1cf; }
.r-olive { fill: #d2cb54; }
.r-green { fill: #609d84; }
.r-orange { fill: #fbaa0f; }
.r-mauve { fill: #a48393; }
.r-lgreen { fill: #a9c0a9; }
.r-purple { fill: #a65d8b; }
.r-pink { fill: #f89aab; }
.r-gray { fill: #bdbbbc; }
.r-blue { fill: #6e87cc; }
.r-gold { fill: #cca44f; }
.r-yellow { fill: #e6e18a; }

.tabs { display: flex; gap: 8px; padding: 4px; background: #f4f4f5; border-radius: 8px; }
.tabs button { flex: 1; height: 46px; background: #fff; border: 1px solid #fff; border-radius: 6px; color: #1e3a8a; }
.tabs .active { background: #dbeafe; border-color: #93c5fd; color: #1e40af; box-shadow: 0 3px 6px rgba(0, 0, 0, .14); }

.panel {
  display: grid; gap: 16px; margin-top: 16px; padding: 24px;
  background: #fff; border-radius: 8px; box-shadow: 0 3px 8px rgba(0, 0, 0, .14);
}
.stat { display: flex; align-items: center; gap: 12px; height: 56px; padding: 0 16px; background: var(--bg); border-radius: 8px; }
.stat .icon, .card-head .icon { color: var(--blue); }
.stat strong { margin-left: auto; color: var(--blue); }
.card { border: 1px solid var(--line); border-radius: 8px; }
.card-head { display: flex; align-items: center; gap: 12px; width: 100%; height: 54px; padding: 0 16px; background: none; border: 0; text-align: left; }
.card-head .chevron { color: #71717a; }
.times { display: grid; gap: 8px; padding: 0 16px 16px; color: #000; }
.times div { display: flex; justify-content: space-between; padding: 8px 0; }
.times div:not(:last-child) { border-bottom: 1px solid var(--line); }
.times dd { color: var(--blue); }

/* Treemap */
.frame { margin: 16px; padding: 16px; border: 1px solid var(--line); border-radius: 6px; }
.treemap { display: flex; gap: 2px; height: 539px; padding: 1px; }
.treemap .col, .treemap .row { display: flex; gap: 2px; flex-basis: 0; min-width: 0; min-height: 0; }
.treemap .col { flex-direction: column; }
.cell { flex-basis: 0; min-width: 0; min-height: 0; overflow: hidden; color: #fff; }
.cell h3 { margin: 3px 0 0 4px; font-size: 15px; line-height: 17px; }
.cell b { display: block; margin: 4px 0 0 4px; font-size: 21px; line-height: 24px; text-shadow: 1px 1px 2px rgba(0, 0, 0, .45); }
.small h3 { font-size: 11px; }
.small b { margin-top: 0; }
.c-blue { background: #4c92c3; }
.c-orange { background: #ff993e; }
.c-green { background: #56b356; }
.c-red { background: #de5253; }
.c-purple { background: #a985ca; }
.c-brown { background: #a3786f; }
.c-pink { background: #e992ce; }
.c-gray { background: #999; }
.c-lime { background: #c9ca4e; }
.c-cyan { background: #45cbd9; }

/* Pies */
.pies { display: grid; grid-template-columns: repeat(3, minmax(0, 1fr)); gap: 16px; padding: 0 16px 16px; }
.pies article { padding: 24px; }
.pies h2 { font-size: 18px; line-height: 28px; text-align: center; color: #1f2937; }
.pie { display: block; width: 256px; max-width: none; height: 256px; margin: 20px -2px 28px; stroke: #fff; stroke-width: 2; }
.pie text { font-size: 11px; font-weight: 700; text-anchor: middle; fill: #333; stroke: none; }
.s1 { fill: #8dd3c7; background: #8dd3c7; }
.s2 { fill: #ffffb3; background: #ffffb3; }
.s3 { fill: #bebada; background: #bebada; }
.s4 { fill: #fb8072; background: #fb8072; }
.legend { border-top: 1px solid var(--line); padding-top: 16px; }
.legend h4 { margin-bottom: 12px; font-size: 14px; color: #374151; }
.legend ul { height: 192px; overflow: hidden; }
.legend li { display: flex; align-items: center; gap: 12px; height: 52px; padding: 8px; margin-bottom: 4px; }
.legend li p { height: 36px; color: #111827; }
.legend i { width: 16px; height: 16px; border-radius: 4px; flex: none; }
.legend small { display: block; font-size: 12px; line-height: 16px; color: #6b7280; }

/* Footer */
.footer { background: #1e40af; color: #fff; }
.stripes { display: grid; grid-template-columns: repeat(4, 1fr); height: 12px; }
.stripes span:nth-child(1) { background: #eab308; }
.stripes span:nth-child(2) { background: #b91c1c; }
.stripes span:nth-child(3) { background: #15803d; }
.footer-cols { display: flex; justify-content: center; gap: 40px; padding: 44px 32px 32px; }
.footer h3 { margin-bottom: 16px; font-size: 16px; line-height: 24px; }
.footer-cols p + p { margin-top: 20px; }
.social { display: grid; gap: 20px; }
.social a { display: flex; align-items: center; gap: 8px; }
.social svg { fill: currentColor; }
.footer-bottom { display: flex; justify-content: space-between; align-items: center; height: 97px; margin: 0 32px; border-top: 1px solid #1d4ed8; }
.dev { display: flex; align-items: center; gap: 12px; }
.jucepi { fill: #fff; font-family: "Open Sans", sans-serif; font-weight: 700; font-style: italic; }
.jucepi-sub { fill: #b9c6ef; font-family: "Open Sans", sans-serif; }
```
